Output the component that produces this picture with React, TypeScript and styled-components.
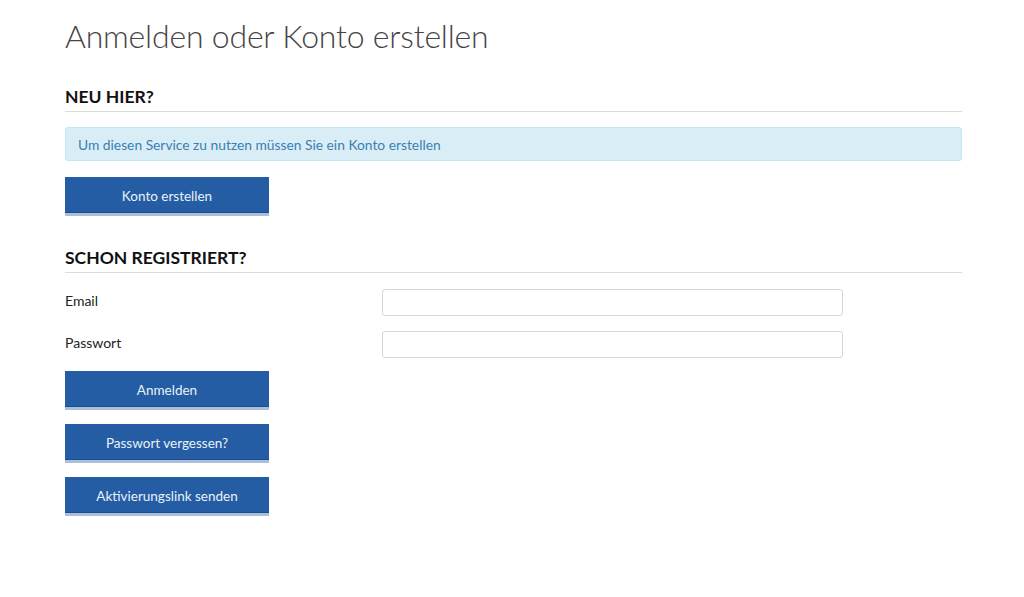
import React from "react"
import styled, { createGlobalStyle } from "styled-components"

const GlobalStyle = createGlobalStyle`
  html, body {
    margin: 0;
    padding: 0;
    background: #fff;
  }
  body {
    font-family: "Lato", "Liberation Sans", sans-serif;
    color: #222;
  }
`

const Page = styled.main`
  width: 897px;
  padding: 16px 0 0 65px;
`

const Title = styled.h1`
  margin: 0 0 29px;
  font-size: 32px;
  font-weight: 300;
  line-height: 40px;
  color: #444;
  letter-spacing: -0.2px;
`

const Section = styled.section`
  margin-bottom: 30px;
`

const SectionHeading = styled.h2`
  margin: 0 0 15px;
  padding-bottom: 2px;
  font-size: 17.5px;
  font-weight: 700;
  line-height: 24px;
  color: #111;
  border-bottom: 1px solid #dcdcdc;
`

const Alert = styled.div`
  box-sizing: border-box;
  height: 34px;
  margin-bottom: 16px;
  padding: 0 12px;
  display: flex;
  align-items: center;
  font-size: 13.8px;
  color: #3a7fb0;
  background: #d9edf7;
  border: 1px solid #c8e6f1;
  border-radius: 3px;
`

const Button = styled.button`
  box-sizing: border-box;
  display: flex;
  align-items: center;
  justify-content: center;
  width: 204px;
  height: 39px;
  padding: 1px 0 0;
  font-family: inherit;
  font-size: 13.5px;
  color: #eaf1fa;
  background: #245da4;
  border: none;
  border-bottom: 3px solid #a9bfdc;
  box-shadow: inset 0 -1px 0 #1c4c89;
  cursor: pointer;
`

const ButtonStack = styled.div`
  display: flex;
  flex-direction: column;
  gap: 14px;
  margin-top: 13px;
`

const Fields = styled.div`
  display: flex;
  flex-direction: column;
  gap: 15px;
  padding-top: 1px;
`

const FieldRow = styled.label`
  display: grid;
  grid-template-columns: 317px 461px;
  align-items: center;
  font-size: 14px;
  line-height: 20px;
  color: #222;
`

const LabelText = styled.span`
  margin-top: -3px;
`

const Input = styled.input`
  box-sizing: border-box;
  height: 27px;
  padding: 0 8px;
  border: 1px solid #d6d6d6;
  border-radius: 3px;
  font-family: inherit;
  font-size: 14px;
`

export default function App() {
  return (
    <>
      <GlobalStyle />
      <Page>
        <Title>Anmelden oder Konto erstellen</Title>

        <Section>
          <SectionHeading>NEU HIER?</SectionHeading>
          <Alert>Um diesen Service zu nutzen müssen Sie ein Konto erstellen</Alert>
          <Button>Konto erstellen</Button>
        </Section>

        <Section>
          <SectionHeading>SCHON REGISTRIERT?</SectionHeading>
          <Fields>
            <FieldRow>
              <LabelText>Email</LabelText>
              <Input type="email" />
            </FieldRow>
            <FieldRow>
              <LabelText>Passwort</LabelText>
              <Input type="password" />
            </FieldRow>
          </Fields>
          <ButtonStack>
            <Button>Anmelden</Button>
            <Button>Passwort vergessen?</Button>
            <Button>Aktivierungslink senden</Button>
          </ButtonStack>
        </Section>
      </Page>
    </>
  )
}
